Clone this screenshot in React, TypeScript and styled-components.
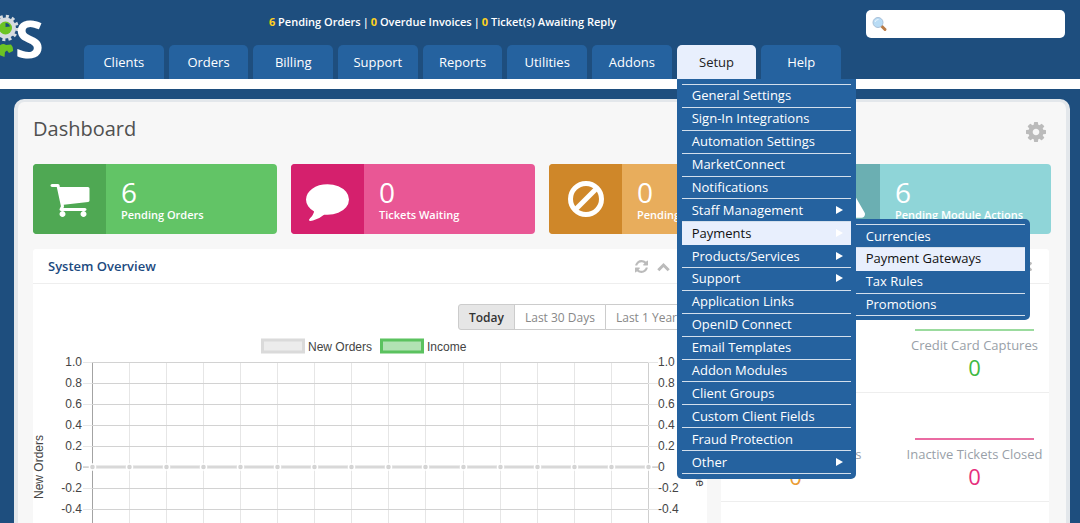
import React from "react";
import styled, { createGlobalStyle, css } from "styled-components";
import { FaExclamationTriangle, FaTimes } from "react-icons/fa";

const GlobalStyle = createGlobalStyle`
  *, *::before, *::after { box-sizing: border-box; }
  body { margin: 0; font-family: "Open Sans", "Noto Sans", sans-serif; font-size: 13px; color: #555; background: #1e4e7e; }
  button, input { font: inherit; }
  ul { list-style: none; margin: 0; padding: 0; }
  h1, h2, p { margin: 0; font-weight: 400; }
  a { color: inherit; text-decoration: none; }
`;

const Page = styled.div`
  height: 100vh;
  overflow: hidden;
  display: flex;
  flex-direction: column;
  background: #1e4e7e;
`;

const Header = styled.header`
  flex: none;
  display: grid;
  grid-template-columns: 84px minmax(0, 757px) 1fr;
  border-bottom: 10px solid #fff;
`;

const Logo = styled.a`
  display: block;
  height: 79px;
  svg { display: block; }
`;

const HeaderMain = styled.div`
  display: flex;
  flex-direction: column;
  justify-content: space-between;
`;

const Notices = styled.div`
  display: flex;
  justify-content: center;
  gap: 2px;
  padding-top: 13px;
  padding-right: 40px;
  font-size: 11px;
  line-height: 18px;
  font-weight: 600;
  color: #fff;
  b { color: #ffd21f; font-weight: 700; }
`;

const Tabs = styled.ul`
  display: flex;
  gap: 5px;
`;

const TabItem = styled.li`
  position: relative;
  flex: 1 1 0;
`;

const Tab = styled.a<{ $active?: boolean }>`
  display: flex;
  align-items: center;
  justify-content: center;
  height: 34px;
  border-radius: 5px 5px 0 0;
  font-size: 13px;
  color: ${(p) => (p.$active ? "#222" : "#fff")};
  background: ${(p) => (p.$active ? "#e8effd" : "#25629f")};
`;

const menuBox = css`
  position: absolute;
  z-index: 5;
  background: #25629f;
  color: #fff;
`;

const Menu = styled.div`
  ${menuBox}
  top: 100%;
  left: 0;
  width: 179px;
  padding: 5px;
  border-radius: 0 0 5px 5px;
`;

const MenuRows = styled.ul`
  display: grid;
  grid-auto-rows: 1fr;
  height: 390px;
  border-top: 1px solid #d3dfec;
`;

const Submenu = styled.div`
  ${menuBox}
  top: -3px;
  left: 174px;
  width: 174px;
  padding: 5px 5px 4px 0;
  border-radius: 0 5px 5px 0;
`;

const SubmenuRows = styled.ul`
  display: grid;
  grid-auto-rows: 1fr;
  height: 92px;
  border-top: 1px solid #d3dfec;
`;

const MenuItem = styled.li`
  position: relative;
`;

const MenuLink = styled.a<{ $active?: boolean }>`
  display: flex;
  align-items: center;
  justify-content: space-between;
  height: 100%;
  padding: 0 8px 1px 10px;
  line-height: 18px;
  border-bottom: 1px solid ${(p) => (p.$active ? "#e8effd" : "#d3dfec")};
  background: ${(p) => (p.$active ? "#e8effd" : "transparent")};
  color: ${(p) => (p.$active ? "#111" : "#fff")};
  font-weight: ${(p) => (p.$active ? 400 : 500)};
`;

const Arrow = styled.span`
  border-left: 7px solid #fff;
  border-top: 4px solid transparent;
  border-bottom: 4px solid transparent;
`;

const SearchBox = styled.label`
  justify-self: end;
  display: flex;
  align-items: center;
  width: 199px;
  height: 28px;
  margin: 10px 15px 0 0;
  padding: 0 6px;
  border-radius: 5px;
  background: #fff;
  input { flex: 1; min-width: 0; border: 0; outline: 0; background: none; }
`;

const Content = styled.main`
  flex: none;
  margin: 10px 10px 0 14px;
  padding: 12px 15px 0;
  border: 4px solid #e3e7eb;
  border-top-width: 3px;
  border-bottom: 0;
  border-radius: 10px 10px 0 0;
  background: #f7f7f7;
`;

const TitleRow = styled.div`
  display: flex;
  align-items: flex-start;
  justify-content: space-between;
  height: 50px;
  padding-right: 5px;
  h1 { font-size: 20px; line-height: 30px; color: #505050; }
  button { margin-top: 8px; }
`;

const IconButton = styled.button`
  display: flex;
  align-items: center;
  justify-content: center;
  padding: 0;
  border: 0;
  background: none;
  color: #bbb;
`;

const Stats = styled.div`
  display: grid;
  grid-template-columns: repeat(4, 1fr);
  gap: 14px;
`;

const StatCard = styled.a<{ $bg: string }>`
  display: flex;
  height: 70px;
  border-radius: 4px;
  overflow: hidden;
  background: ${(p) => p.$bg};
  color: #fff;
`;

const StatIcon = styled.div<{ $bg: string }>`
  display: flex;
  align-items: center;
  justify-content: center;
  width: 73px;
  background: ${(p) => p.$bg};
`;

const StatText = styled.div`
  display: flex;
  flex-direction: column;
  padding: 13px 0 0 15px;
  white-space: nowrap;
  strong { font-size: 28px; line-height: 30px; font-weight: 400; }
  span { font-size: 11px; line-height: 16px; font-weight: 600; }
`;

const Panels = styled.div`
  display: grid;
  grid-template-columns: 674fr 328fr;
  gap: 14px;
  padding: 15px 2px 0 0;
`;

const Panel = styled.section`
  background: #fff;
  border-radius: 3px 3px 0 0;
`;

const PanelHead = styled.div`
  display: flex;
  align-items: center;
  justify-content: space-between;
  height: 35px;
  padding: 0 15px;
  border-bottom: 1px solid #eee;
  h2 { font-size: 13px; font-weight: 600; color: #1c4a80; }
`;

const Tools = styled.div`
  display: flex;
  gap: 9px;
`;

const Periods = styled.div`
  display: flex;
  justify-content: flex-end;
  padding: 20px 19px 0;
`;

const Period = styled.button<{ $active?: boolean }>`
  height: 26px;
  padding: 0 10px;
  border: 1px solid #ccc;
  margin-left: -1px;
  white-space: nowrap;
  font-size: 12px;
  font-weight: ${(p) => (p.$active ? 600 : 400)};
  color: ${(p) => (p.$active ? "#333" : "#888")};
  background: ${(p) => (p.$active ? "#e6e6e6" : "#fff")};
  &:first-child { border-radius: 3px 0 0 3px; }
  &:last-child { border-radius: 0 3px 3px 0; }
`;

const ChartSvg = styled.svg`
  display: block;
  width: 100%;
  font-family: "Liberation Sans", Arial, sans-serif;
  font-size: 12px;
  fill: #444;
`;

const MetricRow = styled.div`
  display: flex;
  justify-content: space-between;
  height: 109px;
  padding: 45px 9px 0;
  border-bottom: 1px solid #eee;
`;

const Metric = styled.div<{ $color: string; $line: string }>`
  display: flex;
  flex-direction: column;
  align-items: center;
  width: 131px;
  white-space: nowrap;
  &::before { content: ""; width: 119px; height: 2px; background: ${(p) => p.$line}; }
  span { margin-top: 5px; line-height: 18px; color: #999fa8; }
  strong { font-size: 22px; line-height: 26px; font-weight: 400; color: ${(p) => p.$color}; }
`;

type Entry = { label: string; children?: string[] };

const setupMenu: Entry[] = [
  { label: "General Settings" },
  { label: "Sign-In Integrations" },
  { label: "Automation Settings" },
  { label: "MarketConnect" },
  { label: "Notifications" },
  { label: "Staff Management", children: [] },
  { label: "Payments", children: ["Currencies", "Payment Gateways", "Tax Rules", "Promotions"] },
  { label: "Products/Services", children: [] },
  { label: "Support", children: [] },
  { label: "Application Links" },
  { label: "OpenID Connect" },
  { label: "Email Templates" },
  { label: "Addon Modules" },
  { label: "Client Groups" },
  { label: "Custom Client Fields" },
  { label: "Fraud Protection" },
  { label: "Other", children: [] },
];

const tabs = ["Clients", "Orders", "Billing", "Support", "Reports", "Utilities", "Addons", "Setup", "Help"];

const glyphs = {
  cart: "M704 1536q0 52-38 90t-90 38-90-38-38-90 38-90 90-38 90 38 38 90zm896 0q0 52-38 90t-90 38-90-38-38-90 38-90 90-38 90 38 38 90zm128-1088v512q0 24-16.500 42.500t-40.500 21.500l-1044 122q13 60 13 70 0 16-24 64h920q26 0 45 19t19 45-19 45-45 19h-1024q-26 0-45-19t-19-45q0-11 8-31.500t16-36 21.500-40 15.500-29.500l-177-823h-204q-26 0-45-19t-19-45 19-45 45-19h256q16 0 28.500 6.500t19.500 15.500 13 24.500 8 26 5.500 29.500 4.500 26h1201q26 0 45 19t19 45z",
  comment: "M1792 896q0 174-120 321.500t-326 233-450 85.500q-70 0-145-8-198 175-460 242-49 14-114 22-17 2-30.500-9t-17.500-29v-1q-3-4-.5-12t2-10 4.500-9.500l6-9 7-8.500 8-9q7-8 31-34.500t34.500-38 31-39.500 32.500-51 27-59 26-76q-157-89-247.500-220t-90.500-281q0-130 71-248.500t191-204.500 286-136.500 348-50.500q244 0 450 85.500t326 233 120 321.500z",
  cog: "M1024 896q0-106-75-181t-181-75-181 75-75 181 75 181 181 75 181-75 75-181zm512-109v222q0 12-8 23t-20 13l-185 28q-19 54-39 91 35 50 107 138 10 12 10 25t-9 23q-27 37-99 108t-94 71q-12 0-26-9l-138-108q-44 23-91 38-16 136-29 186-7 28-36 28h-222q-14 0-24.500-8.500t-11.500-21.500l-28-184q-49-16-90-37l-141 107q-10 9-25 9-14 0-25-11-126-114-165-168-7-10-7-23 0-12 8-23 15-21 51-66.500t54-70.500q-27-50-41-99l-183-27q-13-2-21-12.500t-8-23.500v-222q0-12 8-23t19-13l186-28q14-46 39-92-40-57-107-138-10-12-10-24 0-10 9-23 26-36 98.500-107.500t94.500-71.500q13 0 26 10l138 107q44-23 91-38 16-136 29-186 7-28 36-28h222q14 0 24.500 8.500t11.500 21.500l28 184q49 16 90 37l142-107q9-9 24-9 13 0 25 10 129 119 165 170 7 8 7 22 0 12-8 23-15 21-51 66.500t-54 70.500q26 50 41 98l183 28q13 2 21 12.500t8 23.500z",
  refresh: "M1511 1056q0 5-1 7-64 268-268 434.500t-478 166.500q-146 0-282.500-55t-243.500-157l-129 129q-19 19-45 19t-45-19-19-45v-448q0-26 19-45t45-19h448q26 0 45 19t19 45-19 45l-137 137q71 66 161 102t187 36q134 0 250-65t186-179q11-17 53-117 8-23 30-23h192q13 0 22.500 9.500t9.500 22.500zm25-800v448q0 26-19 45t-45 19h-448q-26 0-45-19t-19-45 19-45l138-138q-148-137-349-137-134 0-250 65t-186 179q-11 17-53 117-8 23-30 23h-199q-13 0-22.500-9.500t-9.500-22.500v-7q65-268 270-434.500t480-166.500q146 0 284 55.500t245 156.500l130-129q19-19 45-19t45 19 19 45z",
};

function Glyph({ name, size, box = "0 0 1792 1792" }: { name: keyof typeof glyphs; size: number; box?: string }) {
  return (
    <svg width={size} height={size} viewBox={box} fill="currentColor" aria-hidden="true">
      <path d={glyphs[name]} />
    </svg>
  );
}

function BanIcon() {
  return (
    <svg width="36" height="36" viewBox="0 0 36 36" fill="none" stroke="currentColor" strokeWidth="5" aria-hidden="true">
      <circle cx="18" cy="18" r="15.500" />
      <path d="M7.500 28.500L28.500 7.500" />
    </svg>
  );
}

function ChevronUp() {
  return (
    <svg width="13" height="13" viewBox="0 0 13 13" fill="none" stroke="currentColor" strokeWidth="3" aria-hidden="true">
      <path d="M1.300 10.200L6.500 5L11.700 10.200" />
    </svg>
  );
}

const stats = [
  { n: 6, label: "Pending Orders", bg: "#62c466", dark: "#4fa853", icon: <Glyph name="cart" size={42} /> },
  { n: 0, label: "Tickets Waiting", bg: "#e95795", dark: "#d5206d", icon: <Glyph name="comment" size={43} /> },
  { n: 0, label: "Pending Cancellations", bg: "#e8ad5c", dark: "#cf8729", icon: <BanIcon /> },
  { n: 6, label: "Pending Module Actions", bg: "#8fd5d8", dark: "#6bafb2", icon: <FaExclamationTriangle size={42} /> },
];

const ticks = ["1.0", "0.8", "0.6", "0.4", "0.2", "0", "-0.2", "-0.4"];

function LogoMark() {
  return (
    <svg width="60" height="79" viewBox="0 0 60 79">
      <circle cx="5.500" cy="28" r="10.500" fill="#d6dbe0" />
      <circle cx="5.500" cy="28" r="11.500" fill="none" stroke="#d6dbe0" strokeWidth="3.400" strokeDasharray="3 3.020" />
      <circle cx="5.500" cy="28" r="6.500" fill="#6cc424" />
      <path d="M5.500 27V23A4.500 4.500 0 0 1 10 26.500Z" fill="#1e4e7e" />
      <path d="M-1 46Q3 42.500 6 45L11 44.500Q13.500 47 13 51L9 53L7 50.500L5 52L4.500 57L-1 55Z" fill="#6cc424" />
      <text x="15" y="58" fontSize="52" fontWeight="700" fill="#fff" fontFamily="Open Sans, sans-serif">S</text>
    </svg>
  );
}

function Magnifier() {
  return (
    <svg width="16" height="16" viewBox="0 0 16 16" aria-hidden="true">
      <path d="M9.500 10L13 13.500" stroke="#b97a45" strokeWidth="3" strokeLinecap="round" />
      <circle cx="6" cy="6.500" r="5" fill="#b9dcf5" stroke="#a9c0d8" />
      <path d="M3 6A3.500 3.500 0 0 1 6.500 3.500" stroke="#eaf6ff" fill="none" />
    </svg>
  );
}

function Chart() {
  const xs = Array.from({ length: 16 }, (_, i) => Math.round(59 + i * 37.05));
  return (
    <ChartSvg viewBox="0 0 674 230" role="img" aria-label="New orders and income">
      <rect x="229.500" y="10" width="41" height="12" fill="#ececec" stroke="#dadada" strokeWidth="3" />
      <text x="275" y="21">New Orders</text>
      <rect x="348.500" y="10" width="41" height="12" fill="#b1e2b3" stroke="#5bc25f" strokeWidth="3" />
      <text x="394" y="21">Income</text>
      {xs.map((x, i) => (
        <line key={x} x1={x + 0.5} x2={x + 0.5} y1="32" y2="230" stroke={i === 0 ? "#a3a3a3" : i === 15 ? "#cfcfcf" : "#e6e6e6"} />
      ))}
      {ticks.map((t, i) => {
        const y = 32 + i * 21;
        return (
          <g key={t}>
            <path d={`M50 ${y + 0.5}H625`} stroke="#e6e6e6" />
            <path d={`M59 ${y + 0.5}H615`} stroke="#d2d2d2" />
            <text x="49" y={y + 4} textAnchor="end">{t}</text>
            <text x="625" y={y + 4}>{t}</text>
          </g>
        );
      })}
      <path d="M50 137H625" stroke="#bbb" />
      <path d="M59 137H615" stroke="#d8d8d8" strokeWidth="3" />
      {xs.map((x) => (
        <g key={x}>
          <circle cx={x + 0.5} cy="137" r="3.800" fill="#fff" />
          <circle cx={x + 0.5} cy="137" r="2.300" fill="#d4d4d4" />
        </g>
      ))}
      <text textAnchor="middle" transform="translate(10 137) rotate(-90)">New Orders</text>
      <text textAnchor="middle" transform="translate(663 137) rotate(90)">Income</text>
    </ChartSvg>
  );
}

function PanelTools() {
  return (
    <Tools>
      <IconButton aria-label="Refresh"><Glyph name="refresh" size={13} box="0 128 1536 1536" /></IconButton>
      <IconButton aria-label="Collapse"><ChevronUp /></IconButton>
      <IconButton aria-label="Close"><FaTimes size={13} /></IconButton>
    </Tools>
  );
}

function SetupMenu() {
  return (
    <Menu>
      <MenuRows>
        {setupMenu.map((e) => (
          <MenuItem key={e.label}>
            <MenuLink href="#" $active={e.label === "Payments"}>
              {e.label}
              {e.children && <Arrow />}
            </MenuLink>
            {e.children && e.children.length > 0 && (
              <Submenu>
                <SubmenuRows>
                  {e.children.map((c) => (
                    <MenuItem key={c}>
                      <MenuLink href="#" $active={c === "Payment Gateways"}>{c}</MenuLink>
                    </MenuItem>
                  ))}
                </SubmenuRows>
              </Submenu>
            )}
          </MenuItem>
        ))}
      </MenuRows>
    </Menu>
  );
}

export default function App() {
  return (
    <Page>
      <GlobalStyle />
      <Header>
        <Logo href="#" aria-label="Home"><LogoMark /></Logo>
        <HeaderMain>
          <Notices>
            <a href="#"><b>6</b> Pending Orders</a>|<a href="#"><b>0</b> Overdue Invoices</a>|<a href="#"><b>0</b> Ticket(s) Awaiting Reply</a>
          </Notices>
          <Tabs>
            {tabs.map((t) => (
              <TabItem key={t}>
                <Tab href="#" $active={t === "Setup"}>{t}</Tab>
                {t === "Setup" && <SetupMenu />}
              </TabItem>
            ))}
          </Tabs>
        </HeaderMain>
        <SearchBox>
          <Magnifier />
          <input type="search" aria-label="Search" />
        </SearchBox>
      </Header>
      <Content>
        <TitleRow>
          <h1>Dashboard</h1>
          <IconButton aria-label="Settings"><Glyph name="cog" size={20} box="0 128 1536 1536" /></IconButton>
        </TitleRow>
        <Stats>
          {stats.map((s) => (
            <StatCard key={s.label} href="#" $bg={s.bg}>
              <StatIcon $bg={s.dark}>{s.icon}</StatIcon>
              <StatText><strong>{s.n}</strong><span>{s.label}</span></StatText>
            </StatCard>
          ))}
        </Stats>
        <Panels>
          <Panel>
            <PanelHead><h2>System Overview</h2><PanelTools /></PanelHead>
            <Periods>
              <Period $active>Today</Period>
              <Period>Last 30 Days</Period>
              <Period>Last 1 Year</Period>
            </Periods>
            <Chart />
          </Panel>
          <Panel>
            <PanelHead><h2>Automation Overview</h2><PanelTools /></PanelHead>
            <MetricRow>
              <Metric $color="#3fb944" $line="#9bdb9e"><span>Invoices Created</span><strong>0</strong></Metric>
              <Metric $color="#3fb944" $line="#9bdb9e"><span>Credit Card Captures</span><strong>0</strong></Metric>
            </MetricRow>
            <MetricRow>
              <Metric $color="#ea9c35" $line="#f0c183"><span>Overdue Suspensions</span><strong>0</strong></Metric>
              <Metric $color="#e62e7d" $line="#ea6ba2"><span>Inactive Tickets Closed</span><strong>0</strong></Metric>
            </MetricRow>
          </Panel>
        </Panels>
      </Content>
    </Page>
  );
}
